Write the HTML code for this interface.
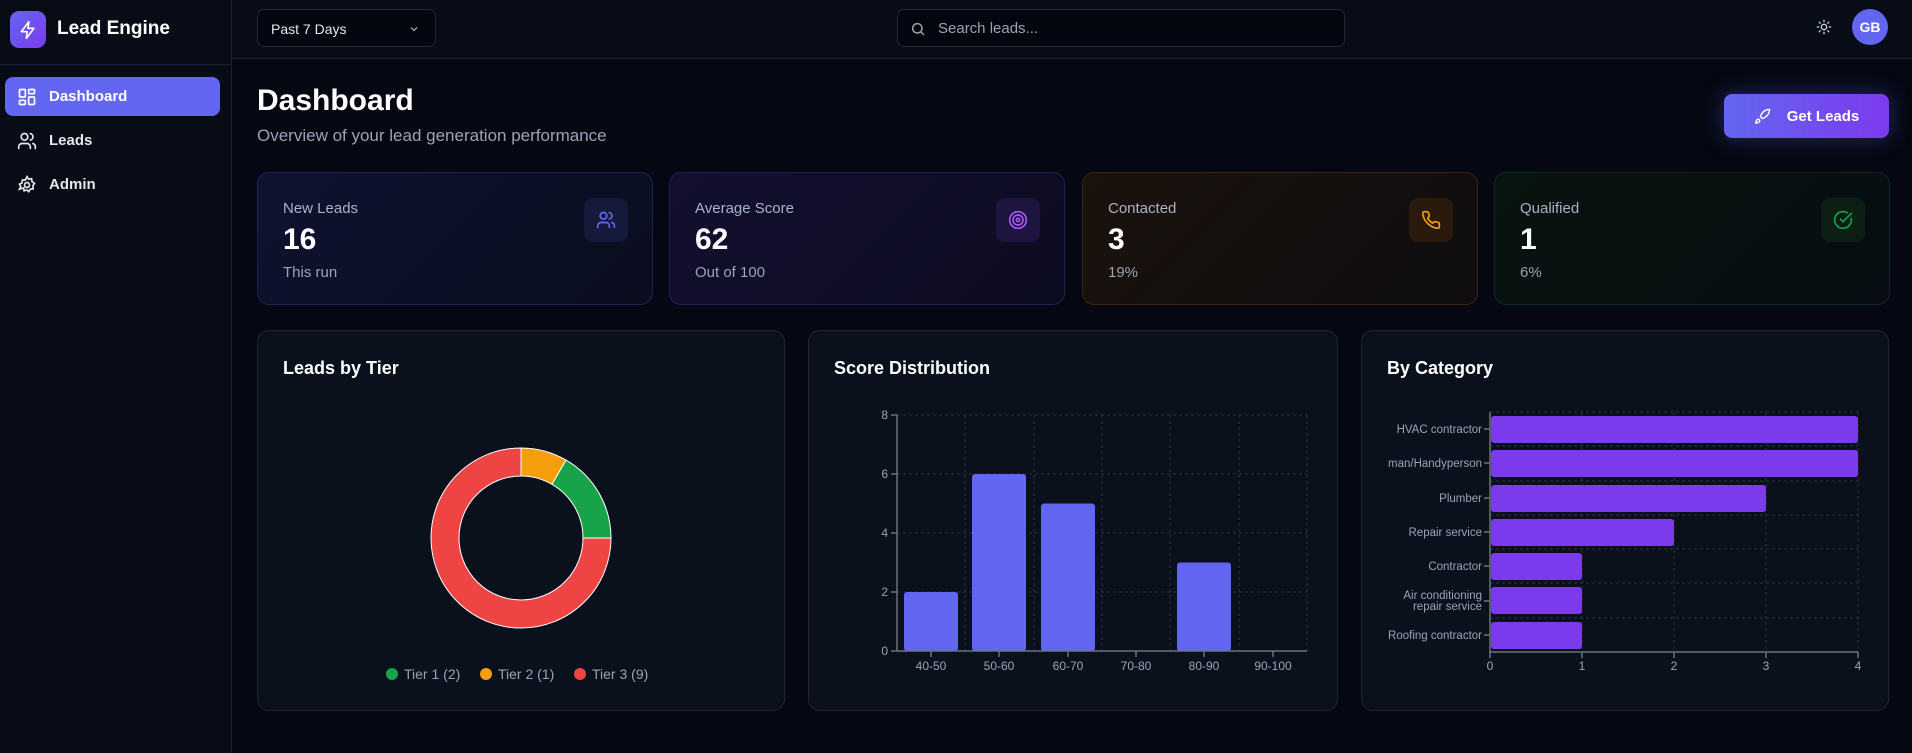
<!DOCTYPE html>
<html><head><meta charset="utf-8"><style>
*{box-sizing:border-box;margin:0;padding:0}
body{width:1912px;height:753px;background:#050813;font-family:"Liberation Sans",sans-serif;color:#fff;position:relative;overflow:hidden}
.abs{position:absolute}
.side{left:0;top:0;width:232px;height:753px;background:#080c17;border-right:1px solid #1a2233}
.hdr{left:232px;top:0;width:1680px;height:59px;background:#080c17;border-bottom:1px solid #1e2636}
.nav{position:absolute;left:5px;width:215px;height:39px;border-radius:8px;display:flex;align-items:center;padding-left:12px;font-size:15px;font-weight:bold;gap:12px;color:#e5e7eb}
.card{position:absolute;border-radius:12px;border:1px solid #1e2636;background:#0b101d}
.stat{top:172px;height:133px;width:396px}
.stat .l{position:absolute;left:25px;top:27px;font-size:15px;color:#aab3c5}
.stat .n{position:absolute;left:25px;top:50px;font-size:30px;font-weight:bold;color:#fff}
.stat .s{position:absolute;left:25px;top:91px;font-size:15px;color:#9ca3b4}
.stat .ic{position:absolute;right:24px;top:25px;width:44px;height:44px;border-radius:9px;display:flex;align-items:center;justify-content:center}
.ch{top:330px;height:381px}
.ch .t{position:absolute;left:25px;top:27px;font-size:18px;font-weight:bold}
svg text{font-family:"Liberation Sans",sans-serif}
</style></head><body>
<div class="abs side"></div>
<div class="abs hdr"></div>
<div class="abs" style="left:0;top:64px;width:232px;height:1px;background:#1a2233"></div>
<div class="abs" style="left:10px;top:11px;width:36px;height:37px;border-radius:9px;background:linear-gradient(135deg,#6366f1,#7c3aed);display:flex;align-items:center;justify-content:center">
<svg width="20" height="20" viewBox="0 0 24 24" fill="none" stroke="#fff" stroke-width="2" stroke-linejoin="round"><path d="M13 2L4 14h7l-1 8 9-12h-7z"/></svg></div>
<div class="abs" style="left:57px;top:18px;font-size:19px;font-weight:bold">Lead Engine</div>
<div class="nav" style="top:77px;background:#6366f1;color:#fff"><svg width="20" height="20" viewBox="0 0 24 24" fill="none" stroke="#fff" stroke-width="2"><rect x="3" y="3" width="7" height="9" rx="1"/><rect x="14" y="3" width="7" height="5" rx="1"/><rect x="14" y="12" width="7" height="9" rx="1"/><rect x="3" y="16" width="7" height="5" rx="1"/></svg>Dashboard</div>
<div class="nav" style="top:121px"><svg width="20" height="20" viewBox="0 0 24 24" fill="none" stroke="#e5e7eb" stroke-width="2" stroke-linecap="round"><circle cx="9" cy="7" r="4"/><path d="M2 21v-2a4 4 0 0 1 4-4h6a4 4 0 0 1 4 4v2M16 3.1a4 4 0 0 1 0 7.8M22 21v-2a4 4 0 0 0-3-3.9"/></svg>Leads</div>
<div class="nav" style="top:165px"><svg width="20" height="20" viewBox="0 0 24 24" fill="none" stroke="#e5e7eb" stroke-width="2"><circle cx="12" cy="12" r="3"/><path d="M12 2l2 3 3.5-.5.5 3.5 3 2-2 3 .5 3.5-3.5.5-2 3-2-2-3.5 1-.5-3.5L3 17l1.5-3L3 11l3-1.5L6.5 6 10 6z"/></svg>Admin</div>

<div class="abs" style="left:257px;top:9px;width:179px;height:38px;border:1px solid #1f2937;border-radius:7px;background:#03060e;font-size:14px;padding:11px 0 0 13px;color:#e5e7eb">Past 7 Days
<svg class="abs" style="left:150px;top:13px" width="12" height="12" viewBox="0 0 24 24" fill="none" stroke="#9ca3af" stroke-width="2.5"><path d="M6 9l6 6 6-6"/></svg></div>
<div class="abs" style="left:897px;top:9px;width:448px;height:38px;border:1px solid #1f2937;border-radius:7px;background:#03060e">
<svg class="abs" style="left:12px;top:11px" width="16" height="16" viewBox="0 0 24 24" fill="none" stroke="#9ca3af" stroke-width="2.2"><circle cx="11" cy="11" r="7"/><path d="M21 21l-5-5"/></svg>
<div class="abs" style="left:40px;top:10px;font-size:15px;color:#9ca3af">Search leads...</div></div>
<svg class="abs" style="left:1816px;top:19px" width="16" height="16" viewBox="0 0 24 24" fill="none" stroke="#cbd5e1" stroke-width="2" stroke-linecap="round"><circle cx="12" cy="12" r="4"/><path d="M12 2v2M12 20v2M4.9 4.9l1.4 1.4M17.7 17.7l1.4 1.4M2 12h2M20 12h2M4.9 19.1l1.4-1.4M17.7 6.3l1.4-1.4"/></svg>
<div class="abs" style="left:1852px;top:9px;width:36px;height:36px;border-radius:50%;background:#6366f1;font-size:14px;font-weight:bold;display:flex;align-items:center;justify-content:center">GB</div>

<div class="abs" style="left:257px;top:84px;font-size:30px;font-weight:bold">Dashboard</div>
<div class="abs" style="left:257px;top:126px;font-size:17px;color:#9ca3b4">Overview of your lead generation performance</div>
<div class="abs" style="left:1724px;top:94px;width:165px;height:44px;border-radius:8px;background:linear-gradient(90deg,#6366f1,#7c3aed);box-shadow:0 0 22px rgba(99,102,241,.35);font-size:15px;font-weight:bold;display:flex;align-items:center;justify-content:center;gap:16px">
<svg width="17" height="17" viewBox="0 0 24 24" fill="none" stroke="#fff" stroke-width="2" stroke-linejoin="round"><path d="M4.5 16.5c-1.5 1.3-2 5-2 5s3.7-.5 5-2c.7-.8.7-2.1-.1-2.9a2.2 2.2 0 0 0-2.9-.1zM12 15l-3-3a22 22 0 0 1 2-4A13 13 0 0 1 22 2c0 2.7-.8 7.5-6 11a22 22 0 0 1-4 2z"/></svg>Get Leads</div>

<div class="card stat" style="left:257px;background:linear-gradient(135deg,#0e1230,#0a0e1e);border-color:#1e2250"><div class="l">New Leads</div><div class="n">16</div><div class="s">This run</div>
<div class="ic" style="background:#15193a"><svg width="20" height="20" viewBox="0 0 24 24" fill="none" stroke="#6366f1" stroke-width="2" stroke-linecap="round"><circle cx="9" cy="7" r="4"/><path d="M2 21v-2a4 4 0 0 1 4-4h6a4 4 0 0 1 4 4v2M16 3.1a4 4 0 0 1 0 7.8M22 21v-2a4 4 0 0 0-3-3.9"/></svg></div></div>
<div class="card stat" style="left:669px;background:linear-gradient(135deg,#130f30,#0c0c20);border-color:#261c52"><div class="l">Average Score</div><div class="n">62</div><div class="s">Out of 100</div>
<div class="ic" style="background:#1d1440"><svg width="20" height="20" viewBox="0 0 24 24" fill="none" stroke="#a855f7" stroke-width="2"><circle cx="12" cy="12" r="10"/><circle cx="12" cy="12" r="6"/><circle cx="12" cy="12" r="2"/></svg></div></div>
<div class="card stat" style="left:1082px;background:linear-gradient(135deg,#1a120c,#0f0d10);border-color:#3a2510"><div class="l">Contacted</div><div class="n">3</div><div class="s">19%</div>
<div class="ic" style="background:#2a1a0e"><svg width="20" height="20" viewBox="0 0 24 24" fill="none" stroke="#f59e0b" stroke-width="2" stroke-linejoin="round"><path d="M22 16.9v3a2 2 0 0 1-2.2 2 19.8 19.8 0 0 1-8.6-3.1 19.5 19.5 0 0 1-6-6A19.8 19.8 0 0 1 2.1 4.2 2 2 0 0 1 4.1 2h3a2 2 0 0 1 2 1.7c.1 1 .4 1.9.7 2.8a2 2 0 0 1-.5 2.1L8 9.8a16 16 0 0 0 6 6l1.3-1.3a2 2 0 0 1 2.1-.4c.9.3 1.8.6 2.8.7a2 2 0 0 1 1.7 2z"/></svg></div></div>
<div class="card stat" style="left:1494px;background:linear-gradient(135deg,#08140f,#070d12);border-color:#0f2a1d"><div class="l">Qualified</div><div class="n">1</div><div class="s">6%</div>
<div class="ic" style="background:#0b1f15"><svg width="20" height="20" viewBox="0 0 24 24" fill="none" stroke="#16a34a" stroke-width="2" stroke-linecap="round"><path d="M21.8 10A10 10 0 1 1 17 3.3"/><path d="M9 11l3 3L22 4"/></svg></div></div>

<div class="card ch" style="left:257px;width:528px"><div class="t">Leads by Tier</div></div>
<div class="card ch" style="left:808px;width:530px"><div class="t">Score Distribution</div></div>
<div class="card ch" style="left:1361px;width:528px"><div class="t">By Category</div></div>

<svg class="abs" style="left:0;top:0" width="1912" height="753">
<g stroke="#fff" stroke-width="1">
<path fill="#f59e0b" d="M521,448 A90,90 0 0 1 566,460.1 L552,484.3 A62,62 0 0 0 521,476 Z"/>
<path fill="#16a34a" d="M566,460.1 A90,90 0 0 1 611,538 L583,538 A62,62 0 0 0 552,484.3 Z"/>
<path fill="#ef4444" d="M611,538 A90,90 0 1 1 521,448 L521,476 A62,62 0 1 0 583,538 Z"/>
</g>
<g font-size="14" fill="#9ca3b4">
<circle cx="392" cy="674" r="6" fill="#16a34a"/><text x="404" y="679">Tier 1 (2)</text>
<circle cx="486" cy="674" r="6" fill="#f59e0b"/><text x="498" y="679">Tier 2 (1)</text>
<circle cx="580" cy="674" r="6" fill="#ef4444"/><text x="592" y="679">Tier 3 (9)</text>
</g>
<g stroke="#2a3140" stroke-dasharray="3 3" fill="none">
<path d="M897 415H1307M897 474H1307M897 533H1307M897 592H1307M965 415V651M1034 415V651M1102 415V651M1170 415V651M1239 415V651M1307 415V651"/>
</g>
<g fill="#6366f1">
<rect x="904" y="592" width="54" height="59" rx="3"/><rect x="972" y="474" width="54" height="177" rx="3"/><rect x="1041" y="503.5" width="54" height="147.5" rx="3"/><rect x="1177" y="562.5" width="54" height="88.5" rx="3"/>
</g>
<g stroke="#6b7280" stroke-width="1.5" fill="none"><path d="M897 415V651H1307M891 415H897M891 474H897M891 533H897M891 592H897M891 651H897M931 651v6M999 651v6M1068 651v6M1136 651v6M1204 651v6M1273 651v6"/></g>
<g font-size="12" fill="#9ca3b4" text-anchor="end"><text x="888" y="419">8</text><text x="888" y="478">6</text><text x="888" y="537">4</text><text x="888" y="596">2</text><text x="888" y="655">0</text></g>
<g font-size="12" fill="#9ca3b4" text-anchor="middle"><text x="931" y="670">40-50</text><text x="999" y="670">50-60</text><text x="1068" y="670">60-70</text><text x="1136" y="670">70-80</text><text x="1204" y="670">80-90</text><text x="1273" y="670">90-100</text></g>
<g stroke="#2a3140" stroke-dasharray="3 3" fill="none"><path d="M1490 412H1858M1490 446H1858M1490 481H1858M1490 515H1858M1490 549H1858M1490 583H1858M1490 618H1858M1582 412V652M1674 412V652M1766 412V652M1858 412V652"/></g>
<g fill="#7c3aed">
<rect x="1491" y="416" width="367" height="27" rx="3"/><rect x="1491" y="450" width="367" height="27" rx="3"/><rect x="1491" y="485" width="275" height="27" rx="3"/><rect x="1491" y="519" width="183" height="27" rx="3"/><rect x="1491" y="553" width="91" height="27" rx="3"/><rect x="1491" y="587" width="91" height="27" rx="3"/><rect x="1491" y="622" width="91" height="27" rx="3"/>
</g>
<g stroke="#6b7280" stroke-width="1.5" fill="none"><path d="M1490 412V652H1858M1484 429H1490M1484 463H1490M1484 498H1490M1484 532H1490M1484 566H1490M1484 601H1490M1484 635H1490M1490 652v6M1582 652v6M1674 652v6M1766 652v6M1858 652v6"/></g>
<g font-size="11.5" fill="#9ca3b4" text-anchor="end">
<text x="1482" y="433">HVAC contractor</text><text x="1482" y="467">man/Handyperson</text><text x="1482" y="502">Plumber</text><text x="1482" y="536">Repair service</text><text x="1482" y="570">Contractor</text><text x="1482" y="599">Air conditioning</text><text x="1482" y="610">repair service</text><text x="1482" y="639">Roofing contractor</text></g>
<g font-size="12" fill="#9ca3b4" text-anchor="middle"><text x="1490" y="670">0</text><text x="1582" y="670">1</text><text x="1674" y="670">2</text><text x="1766" y="670">3</text><text x="1858" y="670">4</text></g>
</svg>
</body></html>
